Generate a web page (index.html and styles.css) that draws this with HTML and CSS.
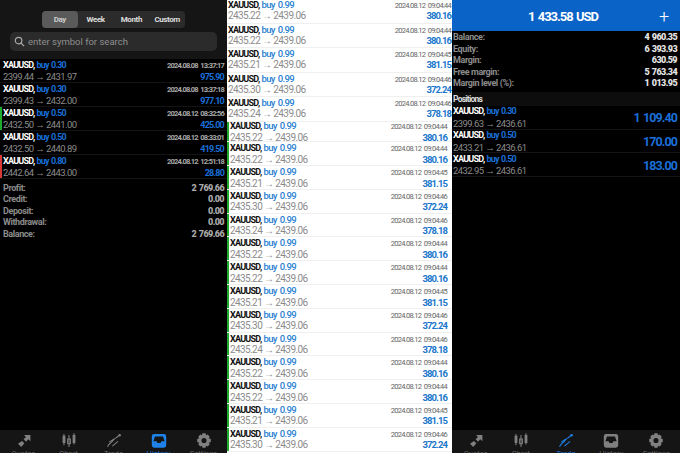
FILE: index.html
```html
<!DOCTYPE html>
<html lang="en">
<head>
<meta charset="utf-8">
<title>Trading history</title>
<link rel="stylesheet" href="styles.css">
</head>
<body>
<div class="page">
  <section class="col dark left">
    <div class="main">
      <div class="top">
        <div class="seg"><span class="on">Day</span><span>Week</span><span>Month</span><span>Custom</span></div>
        <div class="search">
          <svg class="glass" viewBox="0 0 12 12"><circle cx="5" cy="5" r="3.6"/><path d="M7.7 7.7 11 11"/></svg>
          <span>enter symbol for search</span>
        </div>
      </div>
      <div class="deal"><div class="ln"><b>XAUUSD,</b> <i>buy 0.30</i><time>2024.08.08 13:37:17</time></div><div class="ln"><span>2399.44 → 2431.97</span><em>975.90</em></div></div>
      <div class="deal"><div class="ln"><b>XAUUSD,</b> <i>buy 0.30</i><time>2024.08.08 13:37:18</time></div><div class="ln"><span>2399.43 → 2432.00</span><em>977.10</em></div></div>
      <div class="deal green"><div class="ln"><b>XAUUSD,</b> <i>buy 0.50</i><time>2024.08.12 08:32:56</time></div><div class="ln"><span>2432.50 → 2441.00</span><em>425.00</em></div></div>
      <div class="deal"><div class="ln"><b>XAUUSD,</b> <i>buy 0.50</i><time>2024.08.12 08:33:01</time></div><div class="ln"><span>2432.50 → 2440.89</span><em>419.50</em></div></div>
      <div class="deal red"><div class="ln"><b>XAUUSD,</b> <i>buy 0.80</i><time>2024.08.12 12:51:18</time></div><div class="ln"><span>2442.64 → 2443.00</span><em>28.80</em></div></div>
      <div class="sum">
        <div class="kv"><span>Profit:</span><strong>2 769.66</strong></div>
        <div class="kv"><span>Credit:</span><strong>0.00</strong></div>
        <div class="kv"><span>Deposit:</span><strong>0.00</strong></div>
        <div class="kv"><span>Withdrawal:</span><strong>0.00</strong></div>
        <div class="kv"><span>Balance:</span><strong>2 769.66</strong></div>
      </div>
    </div>
    <nav class="tabs">
      <a><svg viewBox="0 0 20 18"><path class="f" d="M10 2h8v8l-2.500-2.500-3 3-3-3 3-3zM7.500 9.500l3 3-4 4.500-4-4z"/></svg><span>Quotes</span></a>
      <a><svg viewBox="0 0 20 18"><path class="f" d="M2 3h3.500v9H2zM14.500 2H18v10h-3.500z"/><path class="s" d="M3.700 1v14M16.200 0v14M10 2v15"/><path class="s" d="M8.300 7h3.400v6H8.300z"/></svg><span>Chart</span></a>
      <a><svg viewBox="0 0 20 18"><circle class="f" cx="17" cy="2.500" r="1.600"/><path class="s" d="M2 17c1-4 3-4 5-6s3-4 5-5 3-2 4-3M4 11l6-4M8 16l7-6"/></svg><span>Trade</span></a>
      <a class="act"><svg viewBox="0 0 20 18"><path class="f" fill-rule="evenodd" d="M4 1h12a3 3 0 0 1 3 3v11a3 3 0 0 1-3 3H4a3 3 0 0 1-3-3V4a3 3 0 0 1 3-3zm1 3L3 10h4l1 2h4l1-2h4l-2-6z"/></svg><span>History</span></a>
      <a><svg viewBox="0 0 20 18"><path class="f" fill-rule="evenodd" d="M8 0h4l.5 2.500 2-1 2.700 2.700-1.200 2 2.500.8v4l-2.500.8 1.200 2-2.700 2.700-2-1L12 18H8l-.5-2.500-2 1-2.700-2.700 1.200-2L1.500 11V7L4 6.200l-1.200-2 2.700-2.700 2 1zM10 5.800a3.200 3.200 0 1 0 0 6.400 3.200 3.200 0 0 0 0-6.400z"/></svg><span>Settings</span></a>
    </nav>
  </section>

  <section class="col light">
    <div class="group first">
      <div class="deal"><div class="ln"><b>XAUUSD,</b> <i>buy 0.99</i><time>2024.08.12 09:04:44</time></div><div class="ln"><span>2435.22 → 2439.06</span><em>380.16</em></div></div>
      <div class="deal"><div class="ln"><b>XAUUSD,</b> <i>buy 0.99</i><time>2024.08.12 09:04:44</time></div><div class="ln"><span>2435.22 → 2439.06</span><em>380.16</em></div></div>
      <div class="deal"><div class="ln"><b>XAUUSD,</b> <i>buy 0.99</i><time>2024.08.12 09:04:45</time></div><div class="ln"><span>2435.21 → 2439.06</span><em>381.15</em></div></div>
      <div class="deal"><div class="ln"><b>XAUUSD,</b> <i>buy 0.99</i><time>2024.08.12 09:04:46</time></div><div class="ln"><span>2435.30 → 2439.06</span><em>372.24</em></div></div>
      <div class="deal"><div class="ln"><b>XAUUSD,</b> <i>buy 0.99</i><time>2024.08.12 09:04:46</time></div><div class="ln"><span>2435.24 → 2439.06</span><em>378.18</em></div></div>
    </div>
    <div class="group second">
      <div class="deal"><div class="ln"><b>XAUUSD,</b> <i>buy 0.99</i><time>2024.08.12 09:04:44</time></div><div class="ln"><span>2435.22 → 2439.06</span><em>380.16</em></div></div>
      <div class="deal"><div class="ln"><b>XAUUSD,</b> <i>buy 0.99</i><time>2024.08.12 09:04:44</time></div><div class="ln"><span>2435.22 → 2439.06</span><em>380.16</em></div></div>
      <div class="deal"><div class="ln"><b>XAUUSD,</b> <i>buy 0.99</i><time>2024.08.12 09:04:45</time></div><div class="ln"><span>2435.21 → 2439.06</span><em>381.15</em></div></div>
      <div class="deal"><div class="ln"><b>XAUUSD,</b> <i>buy 0.99</i><time>2024.08.12 09:04:46</time></div><div class="ln"><span>2435.30 → 2439.06</span><em>372.24</em></div></div>
      <div class="deal"><div class="ln"><b>XAUUSD,</b> <i>buy 0.99</i><time>2024.08.12 09:04:46</time></div><div class="ln"><span>2435.24 → 2439.06</span><em>378.18</em></div></div>
      <div class="deal"><div class="ln"><b>XAUUSD,</b> <i>buy 0.99</i><time>2024.08.12 09:04:44</time></div><div class="ln"><span>2435.22 → 2439.06</span><em>380.16</em></div></div>
      <div class="deal"><div class="ln"><b>XAUUSD,</b> <i>buy 0.99</i><time>2024.08.12 09:04:44</time></div><div class="ln"><span>2435.22 → 2439.06</span><em>380.16</em></div></div>
      <div class="deal"><div class="ln"><b>XAUUSD,</b> <i>buy 0.99</i><time>2024.08.12 09:04:45</time></div><div class="ln"><span>2435.21 → 2439.06</span><em>381.15</em></div></div>
      <div class="deal"><div class="ln"><b>XAUUSD,</b> <i>buy 0.99</i><time>2024.08.12 09:04:46</time></div><div class="ln"><span>2435.30 → 2439.06</span><em>372.24</em></div></div>
      <div class="deal"><div class="ln"><b>XAUUSD,</b> <i>buy 0.99</i><time>2024.08.12 09:04:46</time></div><div class="ln"><span>2435.24 → 2439.06</span><em>378.18</em></div></div>
      <div class="deal"><div class="ln"><b>XAUUSD,</b> <i>buy 0.99</i><time>2024.08.12 09:04:44</time></div><div class="ln"><span>2435.22 → 2439.06</span><em>380.16</em></div></div>
      <div class="deal"><div class="ln"><b>XAUUSD,</b> <i>buy 0.99</i><time>2024.08.12 09:04:44</time></div><div class="ln"><span>2435.22 → 2439.06</span><em>380.16</em></div></div>
      <div class="deal"><div class="ln"><b>XAUUSD,</b> <i>buy 0.99</i><time>2024.08.12 09:04:45</time></div><div class="ln"><span>2435.21 → 2439.06</span><em>381.15</em></div></div>
      <div class="deal"><div class="ln"><b>XAUUSD,</b> <i>buy 0.99</i><time>2024.08.12 09:04:46</time></div><div class="ln"><span>2435.30 → 2439.06</span><em>372.24</em></div></div>
    </div>
  </section>

  <section class="col dark right">
    <div class="main">
      <header class="head"><span class="spacer"></span><h1>1 433.58 USD</h1><span class="plus">+</span></header>
      <div class="acct">
        <div class="kv"><span>Balance:</span><strong class="w">4 960.35</strong></div>
        <div class="kv"><span>Equity:</span><strong class="w">6 393.93</strong></div>
        <div class="kv"><span>Margin:</span><strong class="w">630.59</strong></div>
        <div class="kv"><span>Free margin:</span><strong class="w">5 763.34</strong></div>
        <div class="kv"><span>Margin level (%):</span><strong class="w">1 013.95</strong></div>
      </div>
      <div class="pos-h">Positions</div>
      <div class="pos"><div class="pl"><div class="ln"><b>XAUUSD,</b> <i>buy 0.30</i></div><div class="ln"><span>2399.63 → 2436.61</span></div></div><em>1 109.40</em></div>
      <div class="pos"><div class="pl"><div class="ln"><b>XAUUSD,</b> <i>buy 0.50</i></div><div class="ln"><span>2433.21 → 2436.61</span></div></div><em>170.00</em></div>
      <div class="pos"><div class="pl"><div class="ln"><b>XAUUSD,</b> <i>buy 0.50</i></div><div class="ln"><span>2432.95 → 2436.61</span></div></div><em>183.00</em></div>
    </div>
    <nav class="tabs">
      <a><svg viewBox="0 0 20 18"><path class="f" d="M10 2h8v8l-2.500-2.500-3 3-3-3 3-3zM7.500 9.500l3 3-4 4.500-4-4z"/></svg><span>Quotes</span></a>
      <a><svg viewBox="0 0 20 18"><path class="f" d="M2 3h3.500v9H2zM14.500 2H18v10h-3.500z"/><path class="s" d="M3.700 1v14M16.200 0v14M10 2v15"/><path class="s" d="M8.300 7h3.400v6H8.300z"/></svg><span>Chart</span></a>
      <a class="act"><svg viewBox="0 0 20 18"><circle class="f" cx="17" cy="2.500" r="1.600"/><path class="s" d="M2 17c1-4 3-4 5-6s3-4 5-5 3-2 4-3M4 11l6-4M8 16l7-6"/></svg><span>Trade</span></a>
      <a><svg viewBox="0 0 20 18"><path class="f" fill-rule="evenodd" d="M4 1h12a3 3 0 0 1 3 3v11a3 3 0 0 1-3 3H4a3 3 0 0 1-3-3V4a3 3 0 0 1 3-3zm1 3L3 10h4l1 2h4l1-2h4l-2-6z"/></svg><span>History</span></a>
      <a><svg viewBox="0 0 20 18"><path class="f" fill-rule="evenodd" d="M8 0h4l.5 2.500 2-1 2.700 2.700-1.200 2 2.500.8v4l-2.500.8 1.200 2-2.700 2.700-2-1L12 18H8l-.5-2.500-2 1-2.700-2.700 1.200-2L1.500 11V7L4 6.200l-1.200-2 2.700-2.700 2 1zM10 5.800a3.200 3.200 0 1 0 0 6.400 3.200 3.200 0 0 0 0-6.400z"/></svg><span>Settings</span></a>
    </nav>
  </section>
</div>
</body>
</html>
```
FILE: styles.css
```css
* { box-sizing: border-box; }
html, body { margin: 0; height: 100%; background: #000; }
body { font-family: Roboto, "Liberation Sans", sans-serif; font-size: 9.500px; overflow: hidden; }
.page { display: flex; width: 680px; height: 453px; }
.col { height: 453px; overflow: hidden; display: flex; flex-direction: column; flex: none; }
.left { width: 227px; }
.light { width: 225px; background: #fff; color: #888; }
.right { width: 228px; }
.dark { background: #000; color: #8c8c8c; }
.main { flex: 1; min-height: 0; overflow: hidden; }

.top { height: 59px; background: #151515; padding-top: 11px; display: flex; flex-direction: column; align-items: center; }
.seg { display: flex; width: 143px; height: 17px; background: #2b2b2b; border-radius: 4px; }
.seg span { flex: 1; display: flex; align-items: center; justify-content: center; font-size: 8px; font-weight: bold; letter-spacing: -.4px; color: #ddd; }
.seg .on { background: #5a5a5a; border-radius: 4px; color: #ccc; }
.search { margin-top: 4px; width: 207px; height: 19px; background: #2b2b2b; border-radius: 5px; display: flex; align-items: center; gap: 3px; padding-left: 4px; font-size: 9.500px; color: #8f8f8f; }
.glass { width: 11px; height: 11px; fill: none; stroke: #aaa; stroke-width: 1.300; }

.ln { display: flex; align-items: baseline; white-space: pre; }
.ln b { color: #fff; font-weight: bold; font-size: 9px; letter-spacing: -.75px; }
.ln i { font-style: normal; font-weight: bold; font-size: 9px; letter-spacing: -.8px; word-spacing: 1px; color: #1a6fd8; margin-left: 2px; }
.ln time { margin-left: auto; font-size: 7.500px; font-weight: bold; letter-spacing: -.8px; word-spacing: 1.500px; color: #aaa; }
.ln em { margin-left: auto; font-style: normal; font-size: 9px; font-weight: bold; letter-spacing: -.8px; color: #1a6fd8; }
.ln span { color: #8c8c8c; letter-spacing: -.58px; }

.deal { height: 24px; padding: .5px 3px 0; border-bottom: 1px solid #141414; }
.deal .ln { height: 11.500px; line-height: 11.500px; }
.deal.green { box-shadow: inset 2px 0 0 #1faa2e; }
.deal.red { box-shadow: inset 2px 0 0 #d93a35; }

.sum { padding: 3.500px 3px 0; }
.kv { display: flex; justify-content: space-between; height: 11.600px; line-height: 11.600px; font-size: 9px; font-weight: bold; color: #8c8c8c; }
.kv span { letter-spacing: -.4px; }
.kv strong { color: #aaa; letter-spacing: -.6px; word-spacing: 1px; }
.kv strong.w { color: #e4e4e4; }

.light .deal { padding: 0 1px 0 1px; border-bottom: 1px solid #efefef; font-size: 10px; }
.light .ln b { color: #111; }
.light .ln i { color: #2b80d0; font-size: 9.500px; font-weight: 500; letter-spacing: -.6px; }
.light .ln time { color: #666; font-weight: normal; letter-spacing: -.72px; }
.light .ln em { color: #1b77cc; font-size: 9.500px; letter-spacing: -.9px; }
.light .ln span { color: #8c8c8c; letter-spacing: -.6px; }
.first { margin-top: -1px; }
.first .deal { height: 24.600px; }
.first .deal .ln { height: 12px; line-height: 12px; }
.first .deal .ln + .ln { margin-top: -1px; }
.second .deal { height: 23.800px; padding: 0 5px 0 3px; }
.second .deal .ln { height: 11.500px; line-height: 11.500px; }
.second .deal:first-child { height: 22px; }
.second .deal:first-child .ln:first-child { margin-top: -1.750px; }
.second { box-shadow: inset 2px 0 0 #1faa2e; }

.head { height: 31px; background: #0a64c8; display: flex; align-items: center; padding: 2px 6px 0 0; color: #fff; }
.head h1 { flex: 1; margin: 0; text-align: center; font-size: 13px; font-weight: bold; letter-spacing: -1px; word-spacing: 1px; }
.spacer { width: 20px; }
.plus { width: 20px; font-size: 18px; font-weight: 300; line-height: 20px; text-align: center; }
.acct { padding: 1px 3px 0 1px; height: 61px; }
.pos-h { height: 14px; background: #0d0d0d; color: #ddd; font-weight: bold; font-size: 8.500px; letter-spacing: -.75px; line-height: 14px; padding-left: 1px; }
.pos { display: flex; justify-content: space-between; align-items: center; height: 23.700px; padding: 1px 3px 0 1px; border-bottom: 1px solid #141414; }
.pos em { font-style: normal; font-weight: bold; font-size: 12.500px; letter-spacing: -.9px; word-spacing: 1px; color: #1a6fd8; }
.pos .ln { height: 11.500px; line-height: 11.500px; }

.tabs { flex: none; height: 23px; background: #151515; display: flex; justify-content: space-around; padding: 0 1px; overflow: hidden; }
.tabs a { width: 46px; display: flex; flex-direction: column; align-items: center; padding-top: 3px; color: #6a6a6a; font-size: 7.500px; }
.tabs svg { width: 16px; height: 15px; flex: none; }
.tabs span { line-height: 8px; margin-top: 2px; }
.tabs .f { fill: #808080; }
.tabs .s { fill: none; stroke: #808080; stroke-width: 1.300; }
.tabs .act { color: #1a6fd8; }
.tabs .act .f { fill: #1e82e8; }
.tabs .act .s { stroke: #1e82e8; }
```
